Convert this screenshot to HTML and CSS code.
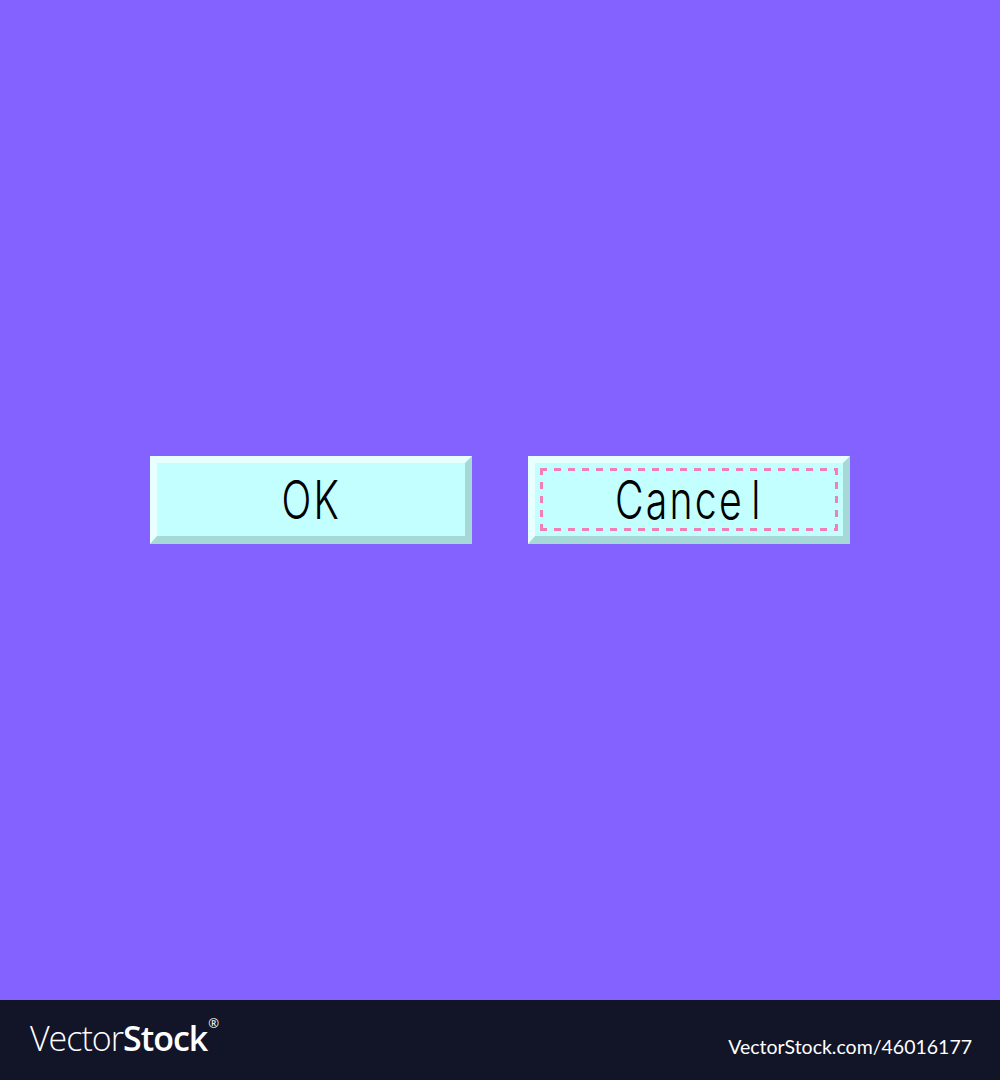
FILE: index.html
```html
<!DOCTYPE html>
<html>
<head>
<meta charset="utf-8">
<link rel="stylesheet" href="styles.css">
</head>
<body>
<main class="stage">
  <div class="btn"><span class="label">OK</span></div>
  <div class="btn focused"><span class="ring"><span class="label">Cance<span class="wide">l</span></span></span></div>
</main>
<footer class="footer">
  <div class="logo"><span class="thin">Vector</span><span class="bold">Stock</span><sup class="reg">®</sup></div>
  <div class="ref">VectorStock.com/46016177</div>
</footer>
</body>
</html>
```
FILE: styles.css
```css
html, body { margin: 0; padding: 0; }
body { width: 1000px; height: 1080px; background: #8462ff; overflow: hidden; }
.stage {
  height: 1000px;
  display: flex;
  align-items: center;
  justify-content: center;
  gap: 56px;
}
.btn {
  box-sizing: border-box;
  width: 322px;
  height: 88px;
  background: #c4ffff;
  border-style: solid;
  border-width: 7px 7px 8px 7px;
  border-color: #e8ffff #a6d8d8 #a6d8d8 #e8ffff;
  display: flex;
  align-items: center;
  justify-content: center;
  padding: 5px;
}
.ring {
  box-sizing: border-box;
  width: 100%;
  height: 100%;
  display: flex;
  align-items: center;
  justify-content: center;
  background:
    repeating-linear-gradient(90deg, #f07fb4 0 7px, transparent 7px 14px) top left / 100% 3px no-repeat,
    repeating-linear-gradient(90deg, #f07fb4 0 7px, transparent 7px 14px) bottom left / 100% 3px no-repeat,
    repeating-linear-gradient(180deg, #f07fb4 0 7px, transparent 7px 14px) top left / 3px 100% no-repeat,
    repeating-linear-gradient(180deg, #f07fb4 0 7px, transparent 7px 14px) top right / 3px 100% no-repeat;
}
.label {
  font-family: Inter, sans-serif;
  font-weight: 300;
  font-size: 53px;
  line-height: 1;
  color: #000;
  display: inline-block;
  letter-spacing: 3px;
  transform: scaleX(0.74);
  margin-top: 2px;
}
.wide { margin-left: 10px; }
.footer {
  height: 80px;
  background: #121427;
  display: flex;
  align-items: center;
  justify-content: space-between;
  padding: 0 28px 0 30px;
  color: #fff;
}
.logo {
  font-family: "Open Sans", sans-serif;
  font-size: 34px;
  letter-spacing: -1px;
  margin-top: -4px;
}
.thin { font-weight: 300; }
.bold { font-weight: 600; }
.reg { font-size: 13px; vertical-align: top; position: relative; top: -1px; margin-left: 1px; }
.ref {
  font-family: Lato, sans-serif;
  font-size: 19.5px;
  margin-top: 12px;
}
```
